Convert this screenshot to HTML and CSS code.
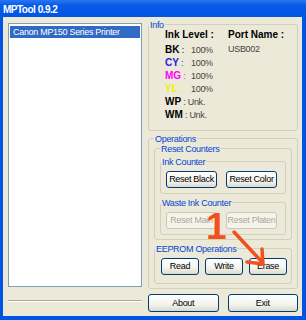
FILE: index.html
```html
<!DOCTYPE html>
<html lang="en">
<head>
  <meta charset="UTF-8">
  <title>MPTool 0.9.2</title>
<link rel="stylesheet" href="styles.css">
</head>
<body>
<div id="mpWindow">
  <div class="titleBar">MPTool 0.9.2</div>
  <div class="client">
    <div class="leftCol">
      <div class="listBox">
        <div class="listItem-selected">Canon MP150 Series Printer</div>
      </div>
      <div class="sep"></div>
    </div>
    <div class="rightCol">
      <div class="group infoGroup">
        <div class="legend">Info</div>
        <div class="infoBody">
          <div class="infoCol">
            <div class="head">Ink Level :</div>
            <div class="row"><span class="kc bk"><b class="k">BK</b> :</span>100%</div>
            <div class="row"><span class="kc cy"><b class="k">CY</b> :</span>100%</div>
            <div class="row"><span class="kc mg"><b class="k">MG</b> :</span>100%</div>
            <div class="row"><span class="kc yl"><b class="k">YL</b> :</span>100%</div>
            <div class="row"><b class="k">WP</b> : Unk.</div>
            <div class="row"><b class="k">WM</b> : Unk.</div>
          </div>
          <div class="infoCol">
            <div class="head">Port Name :</div>
            <div class="row">USB002</div>
          </div>
        </div>
      </div>

      <div class="group opsGroup">
        <div class="legend">Operations</div>
        <div class="group resetGroup">
          <div class="legend">Reset Counters</div>
          <div class="group inkGroup">
            <div class="legend">Ink Counter</div>
            <div class="btnRow">
              <div class="btn btn-wide">Reset Black</div>
              <div class="btn btn-wide">Reset Color</div>
            </div>
          </div>
          <div class="group wasteGroup">
            <div class="legend">Waste Ink Counter</div>
            <div class="btnRow">
              <div class="btn btn-wide btn-disabled">Reset Main</div>
              <div class="btn btn-wide btn-disabled">Reset Platen</div>
            </div>
          </div>
        </div>
        <div class="group eepromGroup">
          <div class="legend">EEPROM Operations</div>
          <div class="btnRow eepromRow">
            <div class="btn btn-small">Read</div>
            <div class="btn btn-small">Write</div>
            <div class="btn btn-small">Erase</div>
          </div>
        </div>
      </div>

      <div class="bottomRow">
        <div class="btn btn-big">About</div>
        <div class="btn btn-big">Exit</div>
      </div>
    </div>
  </div>

  <svg class="annot" width="306" height="320" viewBox="0 0 306 320">
    <text x="206" y="239" class="annotNum">1</text>
    <path d="M234 232 L262 262" />
    <path d="M247 262 L263 264 L262 249" />
  </svg>
</div>
</body>
</html>
```

FILE: styles.css
```css
* {box-sizing:border-box;}
body {margin:0; padding:0;}

#mpWindow {position:relative; width:306px; height:320px; padding:0 4px 4px 3px; background:#0055e5;
           font-family:"Liberation Sans", Arial, sans-serif; font-size:9px; letter-spacing:-0.3px; color:#000;}
.titleBar {height:17px; margin:0 -4px 0 -3px; padding:5px 0 0 3px;
           font-size:10px; font-weight:bold; letter-spacing:-0.5px; line-height:10px; color:#fff;
           background:linear-gradient(#2a76f2, #0a5ae8 30%, #0055e5);}
.client {display:flex; gap:6px; height:299px; padding:0 0 0 5px; background:#ece9d8;}

.leftCol {width:134px;}
.listBox {height:264px; margin-top:6px; padding:2px 1px; border:1px solid #7f9db9; background:#fff;}
.listItem-selected {height:12px; padding-left:3px; line-height:12px; white-space:nowrap; color:#fff; background:#316ac5;}
.sep {height:2px; margin-top:13px; border-top:1px solid #aca899; border-bottom:1px solid #fff;}

.rightCol {width:150px;}
.group {border:1px solid #d0d0bf; border-radius:3px;}
.legend {display:table; margin:-6px 0 -6px 0; padding:0 1px; line-height:12px; white-space:nowrap; color:#0046d5;
         background:#ece9d8;}

.infoGroup {height:107px; margin-top:7px;}
.infoBody {display:flex;}
.infoCol {width:63px; margin-left:16px;}
.infoCol + .infoCol {margin-left:0;}
.head {height:18px; padding-top:3px; font-size:10px; font-weight:bold; letter-spacing:0; line-height:13px;}
.row {height:13px; line-height:13px; white-space:nowrap; color:#444;}
.row .k {font-size:10px; letter-spacing:0; color:#000;}
.kc {display:inline-block; width:26px;}
.kc.bk {color:#000;}
.kc.cy, .kc.cy .k {color:#2020e0;}
.kc.mg, .kc.mg .k {color:#ff00ff;}
.kc.yl, .kc.yl .k {color:#f0f000;}

.opsGroup {height:151px; margin-top:7px; padding:0 5px;}
.resetGroup {height:92px; margin-top:9px; padding:0 5px;}
.inkGroup {height:33px; margin-top:12px;}
.wasteGroup {height:33px; margin-top:8px;}
.eepromGroup {height:36px; margin-top:8px;}
.btnRow {display:flex; gap:9px; padding:9px 0 0 5px;}
.eepromRow {gap:6px; padding:9px 0 0 6px;}

.btn {height:17px; line-height:15px; text-align:center; white-space:nowrap; color:#000; border:1px solid #003c74;
      border-radius:3px; background:linear-gradient(#ffffff, #f4f3ee 60%, #dcd9cb);}
.btn-wide {width:51px;}
.btn-small {width:38px;}
.btn-disabled {color:#aca899; border-color:#c9c7ba; background:#f5f4ea;}
.bottomRow {display:flex; gap:9px; margin-top:5px;}
.btn-big {width:71px; height:18px; line-height:16px;}

.annot {position:absolute; left:0; top:0; pointer-events:none;}
.annot path {fill:none; stroke:#f2501c; stroke-width:3.5; stroke-linecap:round; stroke-linejoin:round;}
.annotNum {font-family:"Liberation Sans", Arial, sans-serif; font-size:37px; font-weight:bold; fill:#f2501c;}
```
